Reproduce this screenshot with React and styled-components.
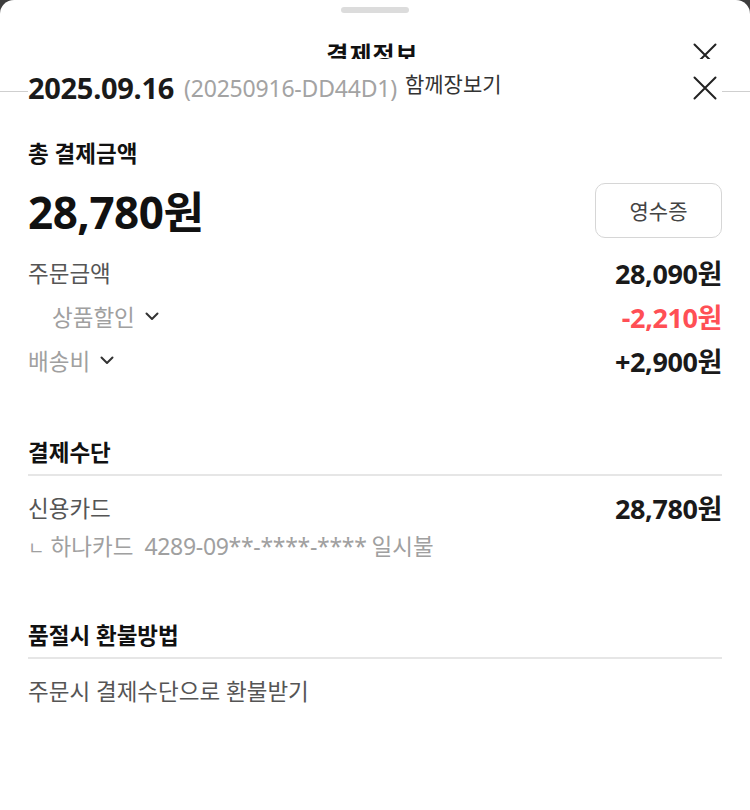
import React from "react";
import styled, { createGlobalStyle } from "styled-components";

const GlobalStyle = createGlobalStyle`
  html, body { margin: 0; padding: 0; background: #3d3d3d; }
  body {
    font-family: "Noto Sans", "Noto Sans CJK KR", sans-serif;
    color: #222;
    -webkit-font-smoothing: antialiased;
  }
  * { box-sizing: border-box; }
`;

const Sheet = styled.div`
  background: #fff;
  border-radius: 14px 14px 0 0;
  min-height: 810px;
  display: flex;
  flex-direction: column;
`;

const Handle = styled.div`
  width: 68px;
  height: 6px;
  border-radius: 3px;
  background: #dcdcdc;
  margin: 7px auto 0;
`;

const Header = styled.header`
  height: 79px;
  border-bottom: 1px solid #cfcfcf;
  display: grid;
  grid-template-columns: 1fr auto 1fr;
  align-items: center;
  padding: 5px 33px 0 28px;
`;

const Title = styled.h1`
  grid-column: 2;
  margin: 0;
  font-size: 24px;
  font-weight: 700;
  letter-spacing: 1px;
  color: #111;
  line-height: 30px;
`;

const IconButton = styled.button`
  justify-self: ${(p) => (p.$end ? "end" : "auto")};
  margin-right: ${(p) => p.$inset || 0}px;
  border: 0;
  padding: 0;
  background: none;
  width: 24px;
  height: 24px;
  display: flex;
  align-items: center;
  justify-content: center;
  color: #222;
  cursor: pointer;
`;

const Content = styled.main`
  position: relative;
  margin: -33px 28px 0;
  background: #fff;
`;

const TopRow = styled.div`
  height: 56px;
  display: flex;
  align-items: center;
  gap: 10px;
  padding-top: 2px;
`;

const OrderDate = styled.span`
  font-size: 29px;
  font-weight: 700;
  color: #1a1a1a;
  line-height: 34px;
  letter-spacing: -0.3px;
`;

const OrderNo = styled.span`
  font-size: 23px;
  color: #a3a3a3;
  line-height: 34px;
  letter-spacing: -0.2px;
`;

const Tag = styled.span`
  font-size: 21px;
  color: #333;
  line-height: 24px;
  margin-left: -2px;
  margin-bottom: 8px;
`;

const Spacer = styled.div`
  flex: 1;
`;

const Section = styled.section`
  margin-top: ${(p) => p.$gap}px;
`;

const SectionTitle = styled.h2`
  margin: 0;
  font-size: 22.5px;
  font-weight: 700;
  color: #111;
  line-height: 28px;
  ${(p) =>
    p.$ruled &&
    `
    padding-bottom: 7px;
    border-bottom: 2px solid #e6e6e6;
  `}
`;

const TotalRow = styled.div`
  margin-top: 14px;
  height: 56px;
  display: flex;
  align-items: center;
  justify-content: space-between;
`;

const TotalAmount = styled.span`
  font-size: 44px;
  font-weight: 700;
  color: #111;
  letter-spacing: -0.5px;
`;

const ReceiptButton = styled.button`
  width: 127px;
  height: 55px;
  border: 1.5px solid #d6d6d6;
  border-radius: 10px;
  background: #fff;
  font-family: inherit;
  font-size: 21px;
  color: #444;
  cursor: pointer;
`;

const Rows = styled.div`
  margin-top: ${(p) => p.$top || 0}px;
  display: flex;
  flex-direction: column;
`;

const Row = styled.div`
  height: ${(p) => p.$h || 44}px;
  display: flex;
  align-items: center;
  justify-content: space-between;
`;

const Label = styled.span`
  display: inline-flex;
  align-items: center;
  gap: 10px;
  font-size: 22.5px;
  color: ${(p) => (p.$muted ? "#a0a0a0" : "#555")};
  padding-left: ${(p) => (p.$indent ? 24 : 0)}px;
`;

const Value = styled.span`
  font-size: 27px;
  font-weight: 700;
  color: ${(p) => (p.$red ? "#ff4f55" : "#1a1a1a")};
  letter-spacing: -0.4px;
`;

const Corner = styled.span`
  font-size: 18px;
  margin-right: 6px;
`;

const CardNo = styled.span`
  font-size: 23px;
  letter-spacing: -0.3px;
  margin: 0 5px 0 11px;
`;

const Chevron = () => (
  <svg width="14" height="9" viewBox="0 0 14 9" fill="none">
    <path d="M1.5 1.5 L7 7 L12.5 1.5" stroke="#333" strokeWidth="2" strokeLinecap="round" strokeLinejoin="round" />
  </svg>
);

const CloseIcon = () => (
  <svg width="24" height="24" viewBox="0 0 24 24" fill="none">
    <path d="M1.5 1.5 L22.5 22.5 M22.5 1.5 L1.5 22.5" stroke="#222" strokeWidth="2" strokeLinecap="round" />
  </svg>
);

export default function App() {
  return (
    <>
      <GlobalStyle />
      <Sheet>
        <Handle />
        <Header>
          <Title>결제정보</Title>
          <IconButton $end aria-label="닫기">
            <CloseIcon />
          </IconButton>
        </Header>
        <Content>
          <TopRow>
            <OrderDate>2025.09.16</OrderDate>
            <OrderNo>(20250916-DD44D1)</OrderNo>
            <Tag>함께장보기</Tag>
            <Spacer />
            <IconButton $inset={5} aria-label="닫기">
              <CloseIcon />
            </IconButton>
          </TopRow>

          <Section $gap={25}>
            <SectionTitle>총 결제금액</SectionTitle>
            <TotalRow>
              <TotalAmount>28,780원</TotalAmount>
              <ReceiptButton>영수증</ReceiptButton>
            </TotalRow>
            <Rows $top={12}>
              <Row>
                <Label>주문금액</Label>
                <Value>28,090원</Value>
              </Row>
              <Row>
                <Label $muted $indent>
                  상품할인 <Chevron />
                </Label>
                <Value $red>-2,210원</Value>
              </Row>
              <Row>
                <Label $muted>
                  배송비 <Chevron />
                </Label>
                <Value>+2,900원</Value>
              </Row>
            </Rows>
          </Section>

          <Section $gap={57}>
            <SectionTitle $ruled>결제수단</SectionTitle>
            <Rows $top={12}>
              <Row $h={38}>
                <Label>신용카드</Label>
                <Value>28,780원</Value>
              </Row>
              <Row $h={38}>
                <Label $muted>
                  <span>
                    <Corner>ㄴ</Corner>하나카드<CardNo>4289-09**-****-****</CardNo>일시불
                  </span>
                </Label>
              </Row>
            </Rows>
          </Section>

          <Section $gap={58}>
            <SectionTitle $ruled>품절시 환불방법</SectionTitle>
            <Rows $top={12}>
              <Row $h={38}>
                <Label>주문시 결제수단으로 환불받기</Label>
              </Row>
            </Rows>
          </Section>
        </Content>
      </Sheet>
    </>
  );
}
